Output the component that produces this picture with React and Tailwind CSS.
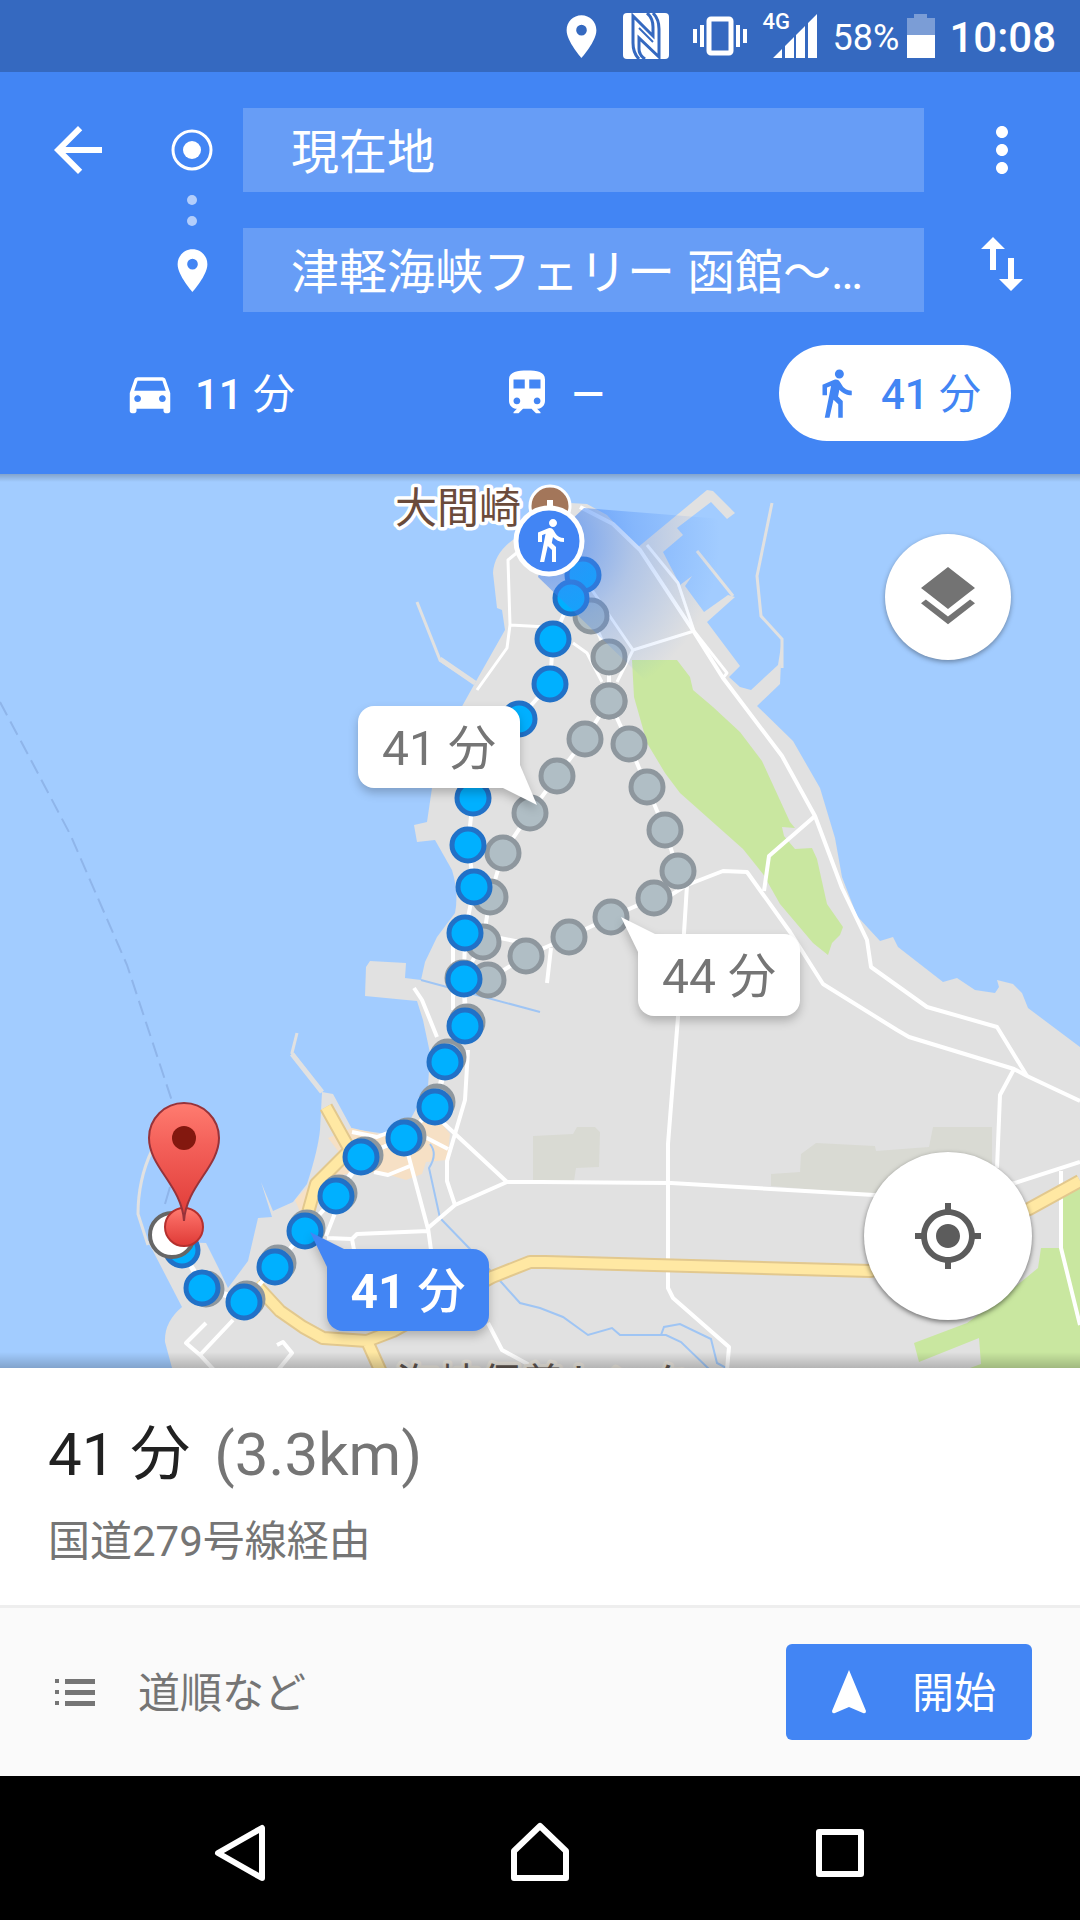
import React from "react";
import {
  MdArrowBack,
  MdDirectionsCar,
  MdDirectionsWalk,
  MdLayers,
  MdMoreVert,
  MdMyLocation,
  MdPlace,
  MdSwapVert,
  MdTrain,
} from "react-icons/md";

const selectedRoute = [
  [583, 575], [571, 598], [553, 639], [550, 684], [519, 719], [495, 760], [473, 798],
  [468, 845], [474, 887], [465, 933], [464, 979], [465, 1026], [445, 1062], [435, 1107],
  [404, 1138], [361, 1157], [336, 1196], [305, 1231], [275, 1267], [244, 1302],
  [202, 1288], [182, 1250],
];

const innerRoute = [
  [591, 616], [609, 657], [609, 701], [585, 739], [557, 776], [530, 813], [503, 853],
  [490, 897], [483, 942], [463, 978], [467, 1022], [448, 1057], [437, 1102], [408, 1136],
  [365, 1155], [339, 1193], [307, 1228], [278, 1263], [247, 1299], [206, 1289], [181, 1249],
];

const outerRoute = [
  [609, 701], [629, 744], [647, 787], [665, 830], [678, 871], [654, 898],
  [611, 917], [569, 937], [526, 956], [488, 980],
];

const line = (points) => points.map((p) => p.join(",")).join(" ");

function NfcIcon() {
  return (
    <svg viewBox="0 0 46 46" className="h-[46px] w-[46px]" aria-hidden="true">
      <rect width="46" height="46" rx="4" fill="#fff" />
      <g fill="none" stroke="#3569c0" strokeWidth="3">
        <path d="M16 46Q10 40 10 30V3L30 23V14Q30 5 24 0" />
        <path d="M30 0Q36 6 36 16V44L16 25V36Q16 42 22 46" />
        <path d="M16 15L30 29" strokeWidth="2" />
      </g>
    </svg>
  );
}

function VibrateIcon() {
  return (
    <svg viewBox="0 0 54 40" className="h-10 w-[54px]" fill="#fff" aria-hidden="true">
      <rect x="0" y="13" width="4" height="14" />
      <rect x="7" y="9" width="4" height="22" />
      <rect x="43" y="9" width="4" height="22" />
      <rect x="50" y="13" width="4" height="14" />
      <rect x="16" y="3" width="22" height="34" rx="2" fill="none" stroke="#fff" strokeWidth="5" />
    </svg>
  );
}

function SignalIcon() {
  return (
    <span className="relative block h-11 w-[54px]">
      <span className="absolute -top-1 left-0 text-[22px] leading-6 font-medium">4G</span>
      <svg viewBox="0 0 54 44" className="h-11 w-[54px]" fill="#fff" aria-hidden="true">
        <path d="M10 44l9-9v9zM22 32l9-9v21h-9zM33 21l9-9v32h-9zM45 9l9-9v44h-9z" />
      </svg>
    </span>
  );
}

function StatusBar() {
  return (
    <div className="flex h-[72px] items-center justify-end bg-[#3569c0] pr-6 text-white">
      <MdPlace className="size-[51px]" />
      <span className="ml-4"><NfcIcon /></span>
      <span className="ml-6"><VibrateIcon /></span>
      <span className="ml-4"><SignalIcon /></span>
      <span className="ml-4 pt-1 text-[36px] leading-10">58%</span>
      <svg viewBox="0 0 28 44" className="ml-2 h-11 w-7" aria-hidden="true">
        <path d="M7 0h13v4h8v17H0V4h7z" fill="#fff" opacity=".35" />
        <path d="M0 21h28v23H0z" fill="#fff" />
      </svg>
      <span className="ml-3.5 pt-1 text-[42px] leading-10 font-medium">10:08</span>
    </div>
  );
}

function ModeTab({ icon: Icon, label, value, unit, active }) {
  return (
    <button
      type="button"
      aria-label={label}
      aria-pressed={active}
      className={
        active
          ? "flex h-24 w-[232px] items-center justify-center gap-[18px] rounded-full bg-white text-[#4285f4]"
          : "flex h-24 w-[232px] items-center justify-center gap-[18px] rounded-full text-white"
      }
    >
      <Icon className="size-[54px]" />
      <span className="pt-1 text-[42px] leading-[54px] font-medium">
        {value}
        {unit && <span className="font-normal"> {unit}</span>}
      </span>
    </button>
  );
}

function Header() {
  const field = "h-[84px] w-full bg-white/20 px-12 pb-1 text-[48px] leading-[60px] text-white outline-none";
  return (
    <header className="bg-[#4285f4] py-[33px] text-white">
      <div className="flex pt-[3px]">
        <button type="button" aria-label="戻る" className="ml-[42px] flex h-[84px] w-[72px] items-center justify-center">
          <MdArrowBack className="size-[72px]" />
        </button>
        <div className="ml-[27px] flex w-[102px] flex-col items-center">
          <div className="flex h-[84px] items-center">
            <svg viewBox="0 0 42 42" className="size-[42px]" aria-hidden="true">
              <circle cx="21" cy="21" r="19" fill="none" stroke="#fff" strokeWidth="3" />
              <circle cx="21" cy="21" r="9" fill="#fff" />
            </svg>
          </div>
          <div className="flex h-9 flex-col items-center justify-center gap-[11px]">
            <span className="size-[10px] rounded-full bg-white/60" />
            <span className="size-[10px] rounded-full bg-white/60" />
          </div>
          <div className="flex h-[84px] items-center">
            <MdPlace className="size-[51px]" />
          </div>
        </div>
        <div className="flex min-w-0 flex-1 flex-col gap-9">
          <input aria-label="出発地" className={field} defaultValue="現在地" />
          <input aria-label="目的地" className={field} defaultValue="津軽海峡フェリー 函館〜…" />
        </div>
        <div className="flex w-[156px] flex-col items-center gap-[42px] pt-[6px]">
          <button type="button" aria-label="その他のオプション"><MdMoreVert className="size-[72px]" /></button>
          <button type="button" aria-label="出発地と目的地を入れ替え"><MdSwapVert className="size-[72px]" /></button>
        </div>
      </div>
      <div className="mt-[33px] flex justify-between pr-[69px] pl-[93px]">
        <ModeTab icon={MdDirectionsCar} label="車 11 分" value="11" unit="分" active={false} />
        <ModeTab icon={MdTrain} label="公共交通機関" value="—" active={false} />
        <ModeTab icon={MdDirectionsWalk} label="徒歩 41 分" value="41" unit="分" active={true} />
      </div>
    </header>
  );
}

function MapDrawing() {
  return (
    <svg viewBox="0 474 1080 894" preserveAspectRatio="xMidYMid slice" className="absolute inset-0 h-full w-full" role="img" aria-label="大間崎周辺の地図">
      <defs>
        <radialGradient id="beam" gradientUnits="userSpaceOnUse" cx="550" cy="540" r="170">
          <stop offset="0" stopColor="#4285f4" stopOpacity=".75" />
          <stop offset=".5" stopColor="#4285f4" stopOpacity=".3" />
          <stop offset="1" stopColor="#4285f4" stopOpacity="0" />
        </radialGradient>
        <linearGradient id="pin" x1="0" y1="0" x2="0" y2="1">
          <stop offset="0" stopColor="#ff7c70" />
          <stop offset=".35" stopColor="#f4615a" />
          <stop offset="1" stopColor="#df3a36" />
        </linearGradient>
      </defs>
      <rect y="474" width="1080" height="894" fill="#a2ccff" />

      <path
        fill="#e1e1e1"
        d="M517 537L550 505L570 503L587 504L607 515L637 548L707 490L713 491L735 513L727 519L711 502L677 528L683 535L663 552L680 585L692 576L685 586L704 612L728 595L735 597L707 622L740 666L729 677L740 687L751 690L778 665L782 640L780 684L757 706L793 741L820 788L835 838L842 877L857 916L880 941L893 937L898 947L943 982L957 978L975 990L995 993L999 987L997 980L1013 984L1022 993L1028 1008L1080 1047V1368H172L165 1342Q164 1322 182 1307L153 1251L147 1241L206 1243L219 1269L228 1288L248 1261L258 1218L272 1217L261 1182L273 1211L293 1202L307 1184Q318 1150 320 1130L322 1092L333 1094L352 1129L387 1134L410 1120L428 1087L430 1053L423 1020L417 1001L365 996L366 967L370 961L406 963L405 978L421 980L425 962L437 937L455 913Q459 893 452 870L435 840L417 842L414 825L427 822L432 788L460 710L475 683L505 630L502 610L497 608L493 573Q494 552 517 537Z"
      />
      <g fill="none" stroke="#e1e1e1" strokeWidth="3">
        <path d="M417 602L440 660L475 683M697 551L733 596M772 503L757 576L761 616L782 639V668M322 1092L292 1053L297 1033M152 1150Q138 1180 138 1214L148 1245" />
        <path d="M440 659L475 683M292 1054L322 1092" strokeWidth="5" />
      </g>

      <path
        fill="#c9e7a0"
        d="M632 660H677L690 677L693 690L713 707L740 732L762 761L790 822L795 828L782 827L784 836L795 849L812 848L817 859L827 904L843 927L840 935L832 943L828 955L813 943L780 904L763 874L743 849L680 793L665 773L647 743L634 697Z"
      />
      <path fill="#c9e7a0" d="M1080 1184L1063 1194V1248H1041L1038 1268L1004 1296L967 1323L914 1343L919 1362L979 1338L981 1364L970 1368H1080Z" />
      <path
        fill="#d9dad3"
        d="M533 1136L573 1134L577 1127H595L600 1132L599 1167L576 1168L574 1181H533ZM816 1143L875 1146L876 1151L929 1147L933 1127H992V1168L874 1195L771 1186V1174L800 1172L801 1154Z"
      />
      <path fill="#f6e0c5" d="M328 1138L352 1128L386 1136L432 1112L450 1134L447 1160L426 1162L422 1174L406 1180L380 1172L345 1174L318 1200L306 1226L295 1200L318 1176L345 1160Z" />

      <g fill="none" stroke="#9fc5f4" strokeWidth="2">
        <path d="M421 980L540 1012M430 1144Q438 1154 429 1168L440 1218L470 1249L502 1283L520 1303L540 1308L563 1317L588 1335L612 1328L620 1335H666L681 1342L710 1370M661 1335L664 1327L680 1324L711 1339L717 1363L730 1370" />
        <path d="M0 702L33 764L70 834L127 965L173 1104" stroke="#8fb5ea" strokeDasharray="15 7" />
        <path d="M170 1187L165 1204" stroke="#8fb5ea" />
      </g>

      <g fill="none" stroke="#fff" strokeWidth="4" strokeLinejoin="round">
        <path d="M477 690L507 648L510 625L508 560L519 551M510 625L547 627M573 643L587 653L602 682M592 590L633 650L617 682M633 650L694 631" strokeWidth="3" />
        <path d="M647 545L678 583L694 631L727 673L722 679" strokeWidth="3" />
        <path d="M580 507L613 524L640 550L694 632L723 678L782 756L815 816L842 888L867 940L871 967L927 1007L997 1027L1027 1076" />
        <path d="M666 898L687 885L723 871L747 872L790 932L823 984L897 1030L909 1037L1014 1069L1027 1076L1080 1101" />
        <path d="M815 816L769 856L764 891M687 885L684 933L678 1017L668 1144V1288L673 1298L729 1347L727 1370M1014 1069L1000 1095L997 1168" />
        <path d="M438 1118L507 1182H540L671 1183L874 1195L1015 1183L1080 1162M1061 1171V1248L1080 1325M507 1182L455 1205L428 1228L431 1250M408 1154L428 1229M428 1231L357 1234L352 1239L327 1238M352 1239L355 1255M326 1236L337 1208" />
        <path d="M468 1050L465 1100L447 1161V1181L455 1205M423 1136L448 1149M352 1132L377 1137L395 1130M374 1172L388 1175L410 1166M414 988L422 1000L437 1037M453 943V1010M551 948L547 983M500 938L520 942" />
        <path d="M233 1320L200 1355L186 1343L206 1323M200 1355L214 1370M277 1345L283 1342L292 1353L278 1370M488 1323L502 1350L535 1368" />
      </g>
      <g fill="none" strokeLinejoin="round">
        <path d="M326 1107L350 1150L316 1184L306 1220M255 1284L280 1311L303 1327L323 1338L367 1341L393 1331L492 1277L530 1262H545L871 1271L1029 1209L1080 1181M367 1341L381 1372" stroke="#e2c88e" strokeWidth="14" />
        <path d="M326 1107L350 1150L316 1184L306 1220M255 1284L280 1311L303 1327L323 1338L367 1341L393 1331L492 1277L530 1262H545L871 1271L1029 1209L1080 1181M367 1341L381 1372" stroke="#ffe8a3" strokeWidth="10" />
      </g>

      <g fill="none" stroke="#fff" strokeWidth="4">
        <polyline points={line(selectedRoute)} />
        <polyline points={line(innerRoute)} />
        <polyline points={line(outerRoute)} />
      </g>
      <g fill="#b0bec5" stroke="#8e979e" strokeWidth="5">
        {outerRoute.map(([x, y]) => <circle key={x + "-" + y} cx={x} cy={y} r="16" />)}
        {innerRoute.map(([x, y]) => <circle key={x + "-" + y} cx={x} cy={y} r="16" />)}
      </g>
      <g fill="#00b0ff" stroke="#2171c7" strokeWidth="5">
        {selectedRoute.map(([x, y]) => <circle key={x + "-" + y} cx={x} cy={y} r="16" />)}
      </g>

      <path d="M584 508L760 522L720 690H655L538 577L550 540Z" fill="url(#beam)" />

      <g fontFamily="Roboto, 'Noto Sans CJK JP', sans-serif" fontSize="42" fill="#6b4b3b" stroke="#fff" strokeWidth="7" strokeLinejoin="round" paintOrder="stroke">
        <text x="395" y="523">大間崎</text>
        <text x="396" y="1399" fill="#5f5650" stroke="#eeeae2">海峡保養センター</text>
      </g>
      <circle cx="550" cy="506" r="20" fill="#a3765a" stroke="#fff" strokeWidth="3" />
      <path d="M547 500h6v8h-6z" fill="#fff" />
      <circle cx="549" cy="541" r="33" fill="#4285f4" stroke="#fff" strokeWidth="5" />
      <MdDirectionsWalk x="526" y="516" size="48" color="#fff" />

      <circle cx="172" cy="1235" r="22" fill="#fff" stroke="#666" strokeWidth="4" />
      <circle cx="184" cy="1227" r="19" fill="url(#pin)" stroke="#b5302e" strokeWidth="2" />
      <path d="M184 1221C182 1186 149 1167 149 1138A35 35 0 0 1 219 1138C219 1167 186 1186 184 1221Z" fill="url(#pin)" stroke="#97333a" strokeWidth="2" />
      <circle cx="184" cy="1138" r="12" fill="#83180f" />
    </svg>
  );
}

function Callout({ look, fill, tail, tailClass, value, unitClass }) {
  return (
    <button type="button" className={"absolute flex h-[82px] w-[162px] items-center justify-center rounded-2xl text-[48px] leading-[60px] drop-shadow-[0_5px_5px_rgba(0,0,0,0.22)] " + look}>
      <svg viewBox="0 0 50 50" className={"absolute size-[50px] " + tailClass} aria-hidden="true">
        <path d={tail} fill={fill} />
      </svg>
      <span className="relative pt-1">{value}<span className={unitClass}> 分</span></span>
    </button>
  );
}

function MapView() {
  return (
    <main className="relative min-h-[600px] flex-1 overflow-hidden bg-[#a2ccff]">
      <MapDrawing />
      <Callout
        look="left-[358px] top-[232px] bg-white text-[#757575]"
        fill="#fff"
        tail="M13 32L49 50L32 10Z"
        tailClass="left-[130px] top-[49px]"
        value="41"
        unitClass="font-normal"
      />
      <Callout
        look="left-[638px] top-[460px] bg-white text-[#757575]"
        fill="#fff"
        tail="M0 0L18 37L36 18Z"
        tailClass="left-[-17px] top-[-17px]"
        value="44"
        unitClass="font-normal"
      />
      <Callout
        look="left-[327px] top-[775px] bg-[#4285f4] text-white font-bold"
        fill="#4285f4"
        tail="M0 0L18 37L36 18Z"
        tailClass="left-[-17px] top-[-17px]"
        value="41"
        unitClass="font-medium"
      />
      <div className="pointer-events-none absolute inset-x-0 top-0 h-2 bg-linear-to-b from-black/20 to-transparent" />
      <div className="pointer-events-none absolute inset-x-0 bottom-0 h-4 bg-linear-to-t from-black/20 to-transparent" />
      <button type="button" aria-label="レイヤ" className="absolute top-[60px] right-[69px] flex size-[126px] items-center justify-center rounded-full bg-white text-[#737373] shadow-[0_2px_5px_rgba(0,0,0,0.35)]">
        <MdLayers className="size-[72px]" />
      </button>
      <button type="button" aria-label="現在地を表示" className="absolute right-[48px] bottom-[48px] flex size-[168px] items-center justify-center rounded-full bg-white text-[#5c5c5c] shadow-[0_2px_5px_rgba(0,0,0,0.5)]">
        <MdMyLocation className="size-[72px]" />
      </button>
    </main>
  );
}

function RouteSheet() {
  return (
    <section>
      <div className="bg-white px-12 pt-12 pb-[33px]">
        <h1 className="text-[60px] leading-[78px] text-[#212121]">
          41 分<span className="ml-6 text-[#757575]">(3.3km)</span>
        </h1>
        <p className="mt-[18px] text-[42px] leading-[60px] text-[#757575]">国道279号線経由</p>
      </div>
      <div className="flex items-center justify-between border-t-3 border-[#eeeeee] bg-[#fafafa] px-12 py-9">
        <button type="button" className="flex h-24 items-center text-[42px] leading-[54px] text-[#757575]">
          <svg viewBox="0 0 54 54" className="size-[54px]" fill="#757575" aria-hidden="true">
            <path d="M7 14h4v4H7zM7 25h4v4H7zM7 36h4v4H7zM17 14h30v5H17zM17 25h30v5H17zM17 36h30v5H17z" />
          </svg>
          <span className="ml-9 pt-1">道順など</span>
        </button>
        <button type="button" className="flex h-24 w-[246px] items-center justify-between rounded-md bg-[#4285f4] pr-9 pl-[45px] text-[42px] leading-[54px] text-white">
          <svg viewBox="0 0 36 44" className="h-11 w-9" fill="#fff" aria-hidden="true">
            <path d="M18 0L35 41Q35 44 32 43L18 37L4 43Q1 44 1 41Z" />
          </svg>
          <span className="pt-1">開始</span>
        </button>
      </div>
    </section>
  );
}

function SystemNav() {
  const common = { fill: "none", stroke: "#fff", strokeWidth: 6, strokeLinejoin: "round" };
  return (
    <nav className="grid h-36 grid-cols-3 bg-black px-[90px] pt-2">
      <button type="button" aria-label="戻る" className="flex items-center justify-center">
        <svg viewBox="0 0 60 60" className="size-[60px]" {...common}><path d="M8 31L52 6V56Z" /></svg>
      </button>
      <button type="button" aria-label="ホーム" className="flex items-center justify-center">
        <svg viewBox="0 0 60 60" className="size-[60px]" {...common}><path d="M4 56V29L30 4L56 29V56Z" /></svg>
      </button>
      <button type="button" aria-label="最近使ったアプリ" className="flex items-center justify-center">
        <svg viewBox="0 0 60 60" className="size-[60px]" {...common}><path d="M9 10H51V52H9Z" /></svg>
      </button>
    </nav>
  );
}

export default function App() {
  return (
    <div lang="ja" className="flex min-h-screen flex-col bg-white font-[Roboto,'Noto_Sans_CJK_JP',sans-serif]">
      <StatusBar />
      <Header />
      <MapView />
      <RouteSheet />
      <SystemNav />
    </div>
  );
}
